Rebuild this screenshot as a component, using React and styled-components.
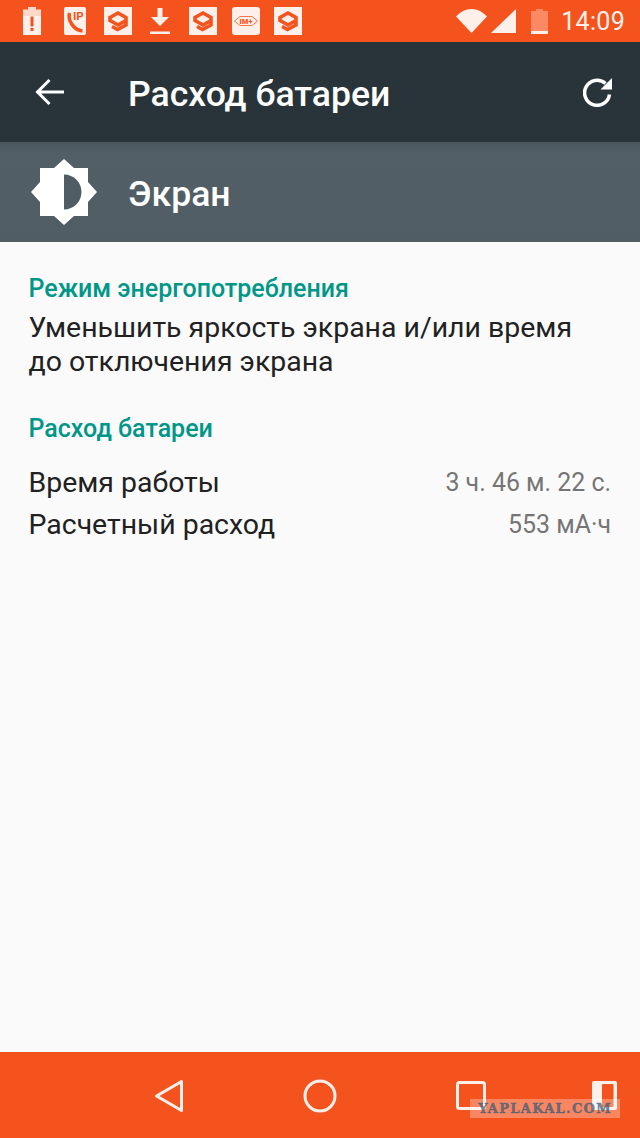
import React from 'react';
import styled, { createGlobalStyle } from 'styled-components';

const GlobalStyle = createGlobalStyle`
  html, body {
    margin: 0;
    padding: 0;
    background: #fafafa;
  }
  * {
    box-sizing: border-box;
  }
`;

const Screen = styled.div`
  position: relative;
  width: 640px;
  height: 1138px;
  display: flex;
  flex-direction: column;
  overflow: hidden;
  background: #fafafa;
  font-family: Roboto, "Noto Sans", sans-serif;
`;

const StatusBar = styled.div`
  height: 42px;
  flex: none;
  display: flex;
  align-items: center;
  padding-left: 11px;
  background: #f5531e;
`;

const Slot = styled.div`
  width: 42.67px;
  height: 42px;
  display: flex;
  align-items: center;
  justify-content: center;
`;

const StatusRight = styled.div`
  margin-left: auto;
  display: flex;
  align-items: center;
  padding-right: 15px;
`;

const Clock = styled.span`
  margin-left: 13px;
  padding-top: 1px;
  color: #fdf0ea;
  font-size: 25px;
  line-height: 42px;
  letter-spacing: 0.3px;
`;

const Toolbar = styled.div`
  height: 100px;
  flex: none;
  display: flex;
  align-items: center;
  padding: 0 27px 0 35px;
  background: #28333a;
`;

const Title = styled.h1`
  margin: 4px 0 0 63px;
  flex: 1;
  color: #fff;
  font-size: 35.6px;
  font-weight: 500;
`;

const HeaderBand = styled.div`
  height: 100px;
  flex: none;
  display: flex;
  align-items: center;
  padding-left: 30px;
  background: linear-gradient(#4a565e 0, #525f67 10px, #505d65 100%);
`;

const HeaderLabel = styled.span`
  margin: 4px 0 0 30px;
  color: #fff;
  font-size: 35.6px;
  font-weight: 500;
`;

const Content = styled.main`
  flex: 1;
  padding: 32px 29px 0 28.5px;
`;

const SectionTitle = styled.h2`
  margin: 0;
  color: #009688;
  font-size: 25px;
  line-height: 30px;
  font-weight: 500;
`;

const Advice = styled.p`
  margin: 7px 0 35px;
  color: #212121;
  font-size: 28.45px;
  line-height: 34px;
`;

const Rows = styled.div`
  margin-top: 21px;
  display: flex;
  flex-direction: column;
  gap: 7px;
`;

const Row = styled.div`
  display: flex;
  justify-content: space-between;
  align-items: center;
  height: 35px;
`;

const RowLabel = styled.span`
  color: #212121;
  font-size: 28.45px;
`;

const RowValue = styled.span`
  color: #757575;
  font-size: 24.9px;
`;

const NavBar = styled.div`
  height: 86px;
  flex: none;
  display: flex;
  align-items: center;
  padding: 1px 0 0 154px;
  background: #f5531e;
`;

const NavItem = styled.div`
  margin-left: ${(props) => props.$gap || 0}px;
  display: flex;
`;

const Watermark = styled.div`
  position: absolute;
  left: 470px;
  top: 1099px;
  width: 150px;
  height: 19px;
  display: flex;
  align-items: center;
  justify-content: center;
  background: rgba(255, 255, 255, 0.3);
  color: rgba(62, 92, 120, 0.72);
  font-family: "DejaVu Serif", serif;
  font-size: 13px;
  font-weight: 700;
  letter-spacing: 1.3px;
  -webkit-text-stroke: 0.5px rgba(62, 92, 120, 0.72);
`;

const ink = '#fdf0ea';
const orange = '#f5531e';

const BatteryAlert = () => (
  <svg width="18" height="28" viewBox="0 0 18 28">
    <path d="M5 0h8v2.500h5V28H0V2.500h5z" fill="#fcd9cb" />
    <path d="M0 9h18v19H0z" fill={ink} />
    <path d="M7.500 9.500h3v10h-3zM7.500 21h3v3h-3z" fill={orange} />
  </svg>
);

const PhoneIp = () => (
  <svg width="22" height="28" viewBox="0 0 22 28">
    <rect width="22" height="28" rx="2" fill={ink} />
    <path d="M5.500 6C3.500 14 10 23 18.500 24" fill="none" stroke={orange} strokeWidth="3.500" />
    <text x="9" y="13" fontFamily="Roboto, sans-serif" fontSize="11.500" fontWeight="700" fill={orange}>IP</text>
  </svg>
);

const LayerLogo = () => (
  <svg width="28" height="28" viewBox="0 0 28 28">
    <rect width="28" height="28" fill={ink} />
    <path d="M8 19.500l5.500 3 8.500-4.500v-7.500L14 6l-8 4.500v3L14 18l8-4.500" fill="none" stroke={orange} strokeWidth="3.600" />
  </svg>
);

const Download = () => (
  <svg width="20" height="26" viewBox="0 0 20 26">
    <path d="M7.500 0h5v9H19l-9 9-9-9h6.500z" fill={ink} />
    <rect y="23.500" width="20" height="2.500" fill={ink} />
  </svg>
);

const ImPlus = () => (
  <svg width="28" height="28" viewBox="0 0 28 28">
    <rect width="28" height="28" rx="3" fill={ink} />
    <path d="M2.500 14L8 9.500h12l5.500 4.500-5.500 4.500H8z" fill="none" stroke={orange} strokeWidth="0.800" />
    <text x="14" y="16.800" textAnchor="middle" fontFamily="Roboto, sans-serif" fontSize="7.500" fontWeight="900" fill={orange}>IM+</text>
  </svg>
);

const Wifi = () => (
  <svg width="31" height="24" viewBox="0 0 31 24">
    <path d="M0 7.500C4 3 9.500 0 15.500 0S27 3 31 7.500L15.500 24z" fill={ink} />
  </svg>
);

const Signal = () => (
  <svg width="25" height="24" viewBox="0 0 25 24" style={{ marginLeft: 4 }}>
    <path d="M25 0v24H0z" fill={ink} />
  </svg>
);

const Battery = () => (
  <svg width="17" height="25" viewBox="0 0 17 25" style={{ marginLeft: 15 }}>
    <path d="M5 0h7v2h5v23H0V2h5z" fill="#fb8a64" />
    <rect y="22" width="17" height="3" fill={ink} />
  </svg>
);

const Back = () => (
  <svg width="30" height="30" viewBox="0 0 30 30">
    <path d="M29 15H3M14.500 3L2.500 15l12 12" fill="none" stroke="#fff" strokeWidth="3" />
  </svg>
);

const Refresh = () => (
  <svg width="30" height="30" viewBox="0 0 30 30">
    <path d="M22.500 6.500a12.500 12.500 0 1 0 4 11" fill="none" stroke="#fff" strokeWidth="3.500" />
    <path d="M29 1v11.500H17.500z" fill="#fff" />
  </svg>
);

const Brightness = () => (
  <svg width="68" height="68" viewBox="0 0 68 68">
    <path d="M34 1l10 9h14v14l9 10-9 10v14H44l-10 9-10-9H10V44L1 34l9-10V10h14z" fill="#fff" />
    <path d="M34 16.500c10 0 17.500 8 17.500 17.500S44 51.500 34 51.500z" fill="#505d65" />
  </svg>
);

const NavBack = () => (
  <svg width="30" height="34" viewBox="0 0 30 34">
    <path d="M27.500 2.500v29L2.500 17z" fill="none" stroke={ink} strokeWidth="3" strokeLinejoin="round" />
  </svg>
);

const NavHome = () => (
  <svg width="34" height="34" viewBox="0 0 34 34">
    <circle cx="17" cy="17" r="15" fill="none" stroke={ink} strokeWidth="3" />
  </svg>
);

const NavRecents = () => (
  <svg width="30" height="29" viewBox="0 0 30 29">
    <rect x="1.500" y="1.500" width="27" height="26" rx="2" fill="none" stroke={ink} strokeWidth="3" />
  </svg>
);

const NavSplit = () => (
  <svg width="25" height="29" viewBox="0 0 25 29">
    <rect width="25" height="29" rx="2" fill={ink} />
    <rect x="10" y="3" width="11.500" height="23" rx="1" fill={orange} />
  </svg>
);

const App = () => (
  <Screen>
    <GlobalStyle />
    <StatusBar>
      <Slot><BatteryAlert /></Slot>
      <Slot><PhoneIp /></Slot>
      <Slot><LayerLogo /></Slot>
      <Slot><Download /></Slot>
      <Slot><LayerLogo /></Slot>
      <Slot><ImPlus /></Slot>
      <Slot><LayerLogo /></Slot>
      <StatusRight>
        <Wifi />
        <Signal />
        <Battery />
        <Clock>14:09</Clock>
      </StatusRight>
    </StatusBar>
    <Toolbar>
      <Back />
      <Title>Расход батареи</Title>
      <Refresh />
    </Toolbar>
    <HeaderBand>
      <Brightness />
      <HeaderLabel>Экран</HeaderLabel>
    </HeaderBand>
    <Content>
      <SectionTitle>Режим энергопотребления</SectionTitle>
      <Advice>
        Уменьшить яркость экрана и/или время
        <br />
        до отключения экрана
      </Advice>
      <SectionTitle>Расход батареи</SectionTitle>
      <Rows>
        <Row>
          <RowLabel>Время работы</RowLabel>
          <RowValue>3 ч. 46 м. 22 с.</RowValue>
        </Row>
        <Row>
          <RowLabel>Расчетный расход</RowLabel>
          <RowValue>553 мА·ч</RowValue>
        </Row>
      </Rows>
    </Content>
    <NavBar>
      <NavItem><NavBack /></NavItem>
      <NavItem $gap={119}><NavHome /></NavItem>
      <NavItem $gap={119}><NavRecents /></NavItem>
      <NavItem $gap={106}><NavSplit /></NavItem>
    </NavBar>
    <Watermark>YAPLAKAL.COM</Watermark>
  </Screen>
);

export default App;
